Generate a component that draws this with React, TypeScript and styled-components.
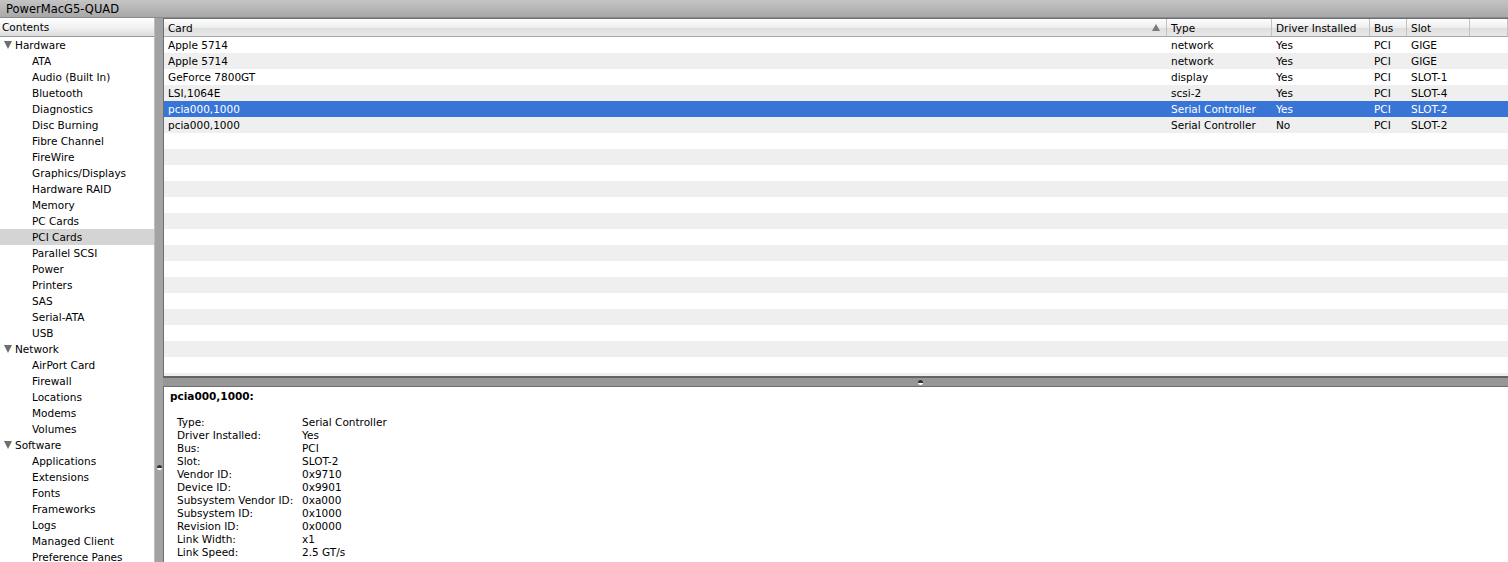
import React from 'react';
import styled, { createGlobalStyle } from 'styled-components';

const GlobalStyle = createGlobalStyle`
  html, body {
    margin: 0;
    padding: 0;
    background: #ffffff;
  }
  body {
    font-family: 'DejaVu Sans', 'Liberation Sans', sans-serif;
    font-size: 10.5px;
    color: #000;
  }
`;

interface SidebarEntry {
  label: string;
  section?: boolean;
  active?: boolean;
}

interface CardRow {
  card: string;
  type: string;
  driver: string;
  bus: string;
  slot: string;
  selected?: boolean;
}

const sidebar: SidebarEntry[] = [
  { label: 'Hardware', section: true },
  { label: 'ATA' },
  { label: 'Audio (Built In)' },
  { label: 'Bluetooth' },
  { label: 'Diagnostics' },
  { label: 'Disc Burning' },
  { label: 'Fibre Channel' },
  { label: 'FireWire' },
  { label: 'Graphics/Displays' },
  { label: 'Hardware RAID' },
  { label: 'Memory' },
  { label: 'PC Cards' },
  { label: 'PCI Cards', active: true },
  { label: 'Parallel SCSI' },
  { label: 'Power' },
  { label: 'Printers' },
  { label: 'SAS' },
  { label: 'Serial-ATA' },
  { label: 'USB' },
  { label: 'Network', section: true },
  { label: 'AirPort Card' },
  { label: 'Firewall' },
  { label: 'Locations' },
  { label: 'Modems' },
  { label: 'Volumes' },
  { label: 'Software', section: true },
  { label: 'Applications' },
  { label: 'Extensions' },
  { label: 'Fonts' },
  { label: 'Frameworks' },
  { label: 'Logs' },
  { label: 'Managed Client' },
  { label: 'Preference Panes' }
];

const cards: CardRow[] = [
  { card: 'Apple 5714', type: 'network', driver: 'Yes', bus: 'PCI', slot: 'GIGE' },
  { card: 'Apple 5714', type: 'network', driver: 'Yes', bus: 'PCI', slot: 'GIGE' },
  { card: 'GeForce 7800GT', type: 'display', driver: 'Yes', bus: 'PCI', slot: 'SLOT-1' },
  { card: 'LSI,1064E', type: 'scsi-2', driver: 'Yes', bus: 'PCI', slot: 'SLOT-4' },
  { card: 'pcia000,1000', type: 'Serial Controller', driver: 'Yes', bus: 'PCI', slot: 'SLOT-2', selected: true },
  { card: 'pcia000,1000', type: 'Serial Controller', driver: 'No', bus: 'PCI', slot: 'SLOT-2' }
];

const details: [string, string][] = [
  ['Type:', 'Serial Controller'],
  ['Driver Installed:', 'Yes'],
  ['Bus:', 'PCI'],
  ['Slot:', 'SLOT-2'],
  ['Vendor ID:', '0x9710'],
  ['Device ID:', '0x9901'],
  ['Subsystem Vendor ID:', '0xa000'],
  ['Subsystem ID:', '0x1000'],
  ['Revision ID:', '0x0000'],
  ['Link Width:', 'x1'],
  ['Link Speed:', '2.5 GT/s']
];

const COLS = '1003px 105px 98px 37px 63px 1fr';

const Window = styled.div`
  width: 1508px;
  height: 562px;
  display: flex;
  flex-direction: column;
  overflow: hidden;
`;

const TitleBar = styled.div`
  height: 18px;
  flex: none;
  display: flex;
  align-items: center;
  padding-left: 6px;
  font-size: 11.5px;
  background: linear-gradient(#c4c4c4, #a8a8a8);
  border-bottom: 1px solid #8a8a8a;
  box-sizing: border-box;
`;

const Body = styled.div`
  flex: 1;
  display: flex;
  min-height: 0;
`;

const Sidebar = styled.div`
  width: 155px;
  flex: none;
  display: flex;
  flex-direction: column;
  background: #fff;
  border-right: 1px solid #bdbdbd;
  box-sizing: border-box;
  overflow: hidden;
`;

const ColumnHeader = styled.div`
  height: 19px;
  flex: none;
  display: flex;
  align-items: center;
  padding-left: 2px;
  background: linear-gradient(#ffffff, #f0f0f0 55%, #dcdcdc);
  border-bottom: 1px solid #9a9a9a;
  box-sizing: border-box;
`;

const TreeRow = styled.div<{ $section?: boolean; $active?: boolean }>`
  height: 16px;
  flex: none;
  display: flex;
  align-items: center;
  padding-left: ${p => (p.$section ? '4px' : '32px')};
  background: ${p => (p.$active ? '#d4d4d4' : 'transparent')};
  white-space: nowrap;
`;

const Disclosure = styled.span`
  width: 0;
  height: 0;
  border-left: 4.5px solid transparent;
  border-right: 4.5px solid transparent;
  border-top: 8px solid #6e6e6e;
  margin-right: 3px;
`;

const VSplit = styled.div`
  width: 8px;
  flex: none;
  background: #a3a3a3;
  display: flex;
  justify-content: center;
  align-items: flex-start;
  padding-top: 447px;
  box-sizing: border-box;
`;

const Grip = styled.span`
  width: 5px;
  height: 5px;
  border-radius: 50%;
  background: linear-gradient(#333 50%, #fff 50%);
`;

const Main = styled.div`
  flex: 1;
  display: flex;
  flex-direction: column;
  min-width: 0;
`;

const TablePanel = styled.div`
  height: 358px;
  flex: none;
  display: flex;
  flex-direction: column;
  border-left: 1px solid #6a6f74;
  border-top: 1px solid #6a6f74;
  box-sizing: border-box;
  overflow: hidden;
  background: #fff;
`;

const HeaderRow = styled.div`
  display: grid;
  grid-template-columns: ${COLS};
  height: 18px;
  flex: none;
  background: linear-gradient(#fdfdfd, #eeeeee 50%, #dedede 51%, #e8e8e8);
  border-bottom: 1px solid #a8a8a8;
  box-sizing: border-box;
`;

const HeaderCell = styled.div`
  display: flex;
  align-items: center;
  justify-content: space-between;
  padding: 0 6px 0 4px;
  border-right: 1px solid #c2c2c2;
  white-space: nowrap;
`;

const SortArrow = styled.span`
  width: 0;
  height: 0;
  border-left: 4px solid transparent;
  border-right: 4px solid transparent;
  border-bottom: 7px solid #7a7a7a;
`;

const Rows = styled.div`
  flex: 1;
  overflow: hidden;
`;

const Row = styled.div<{ $odd: boolean; $selected?: boolean }>`
  display: grid;
  grid-template-columns: ${COLS};
  height: 16px;
  align-items: center;
  background: ${p => (p.$selected ? '#3875d7' : p.$odd ? '#efefef' : '#ffffff')};
  color: ${p => (p.$selected ? '#ffffff' : '#000000')};
`;

const Cell = styled.div`
  padding-left: 4px;
  white-space: nowrap;
  overflow: hidden;
`;

const HSplit = styled.div`
  height: 11px;
  flex: none;
  display: flex;
  justify-content: flex-start;
  align-items: center;
  background: #979797;
  border-top: 2px solid #5f656b;
  border-bottom: 1px solid #6e6e6e;
  box-sizing: border-box;
  padding-left: 755px;
`;

const DetailPanel = styled.div`
  flex: 1;
  background: #fff;
  border-left: 1px solid #6a6f74;
  padding: 3px 0 0 6px;
  overflow: hidden;
`;

const DetailTitle = styled.div`
  font-weight: bold;
  height: 13px;
  line-height: 13px;
  margin-bottom: 13px;
`;

const DetailGrid = styled.div`
  display: grid;
  grid-template-columns: 125px auto;
  line-height: 13px;
  padding-left: 7px;
`;

const App: React.FC = () => {
  const blanks = Array.from({ length: 16 });
  return (
    <Window>
      <GlobalStyle />
      <TitleBar>PowerMacG5-QUAD</TitleBar>
      <Body>
        <Sidebar>
          <ColumnHeader>Contents</ColumnHeader>
          {sidebar.map((s, i) => (
            <TreeRow key={i} $section={s.section} $active={s.active}>
              {s.section && <Disclosure />}
              {s.label}
            </TreeRow>
          ))}
        </Sidebar>
        <VSplit>
          <Grip />
        </VSplit>
        <Main>
          <TablePanel>
            <HeaderRow>
              <HeaderCell>
                Card
                <SortArrow />
              </HeaderCell>
              <HeaderCell>Type</HeaderCell>
              <HeaderCell>Driver Installed</HeaderCell>
              <HeaderCell>Bus</HeaderCell>
              <HeaderCell>Slot</HeaderCell>
              <HeaderCell />
            </HeaderRow>
            <Rows>
              {cards.map((c, i) => (
                <Row key={i} $odd={i % 2 === 1} $selected={c.selected}>
                  <Cell>{c.card}</Cell>
                  <Cell>{c.type}</Cell>
                  <Cell>{c.driver}</Cell>
                  <Cell>{c.bus}</Cell>
                  <Cell>{c.slot}</Cell>
                  <Cell />
                </Row>
              ))}
              {blanks.map((_, i) => (
                <Row key={'b' + i} $odd={(i + cards.length) % 2 === 1} />
              ))}
            </Rows>
          </TablePanel>
          <HSplit>
            <Grip />
          </HSplit>
          <DetailPanel>
            <DetailTitle>pcia000,1000:</DetailTitle>
            <DetailGrid>
              {details.map(([k, v]) => (
                <React.Fragment key={k}>
                  <span>{k}</span>
                  <span>{v}</span>
                </React.Fragment>
              ))}
            </DetailGrid>
          </DetailPanel>
        </Main>
      </Body>
    </Window>
  );
};

export default App;
